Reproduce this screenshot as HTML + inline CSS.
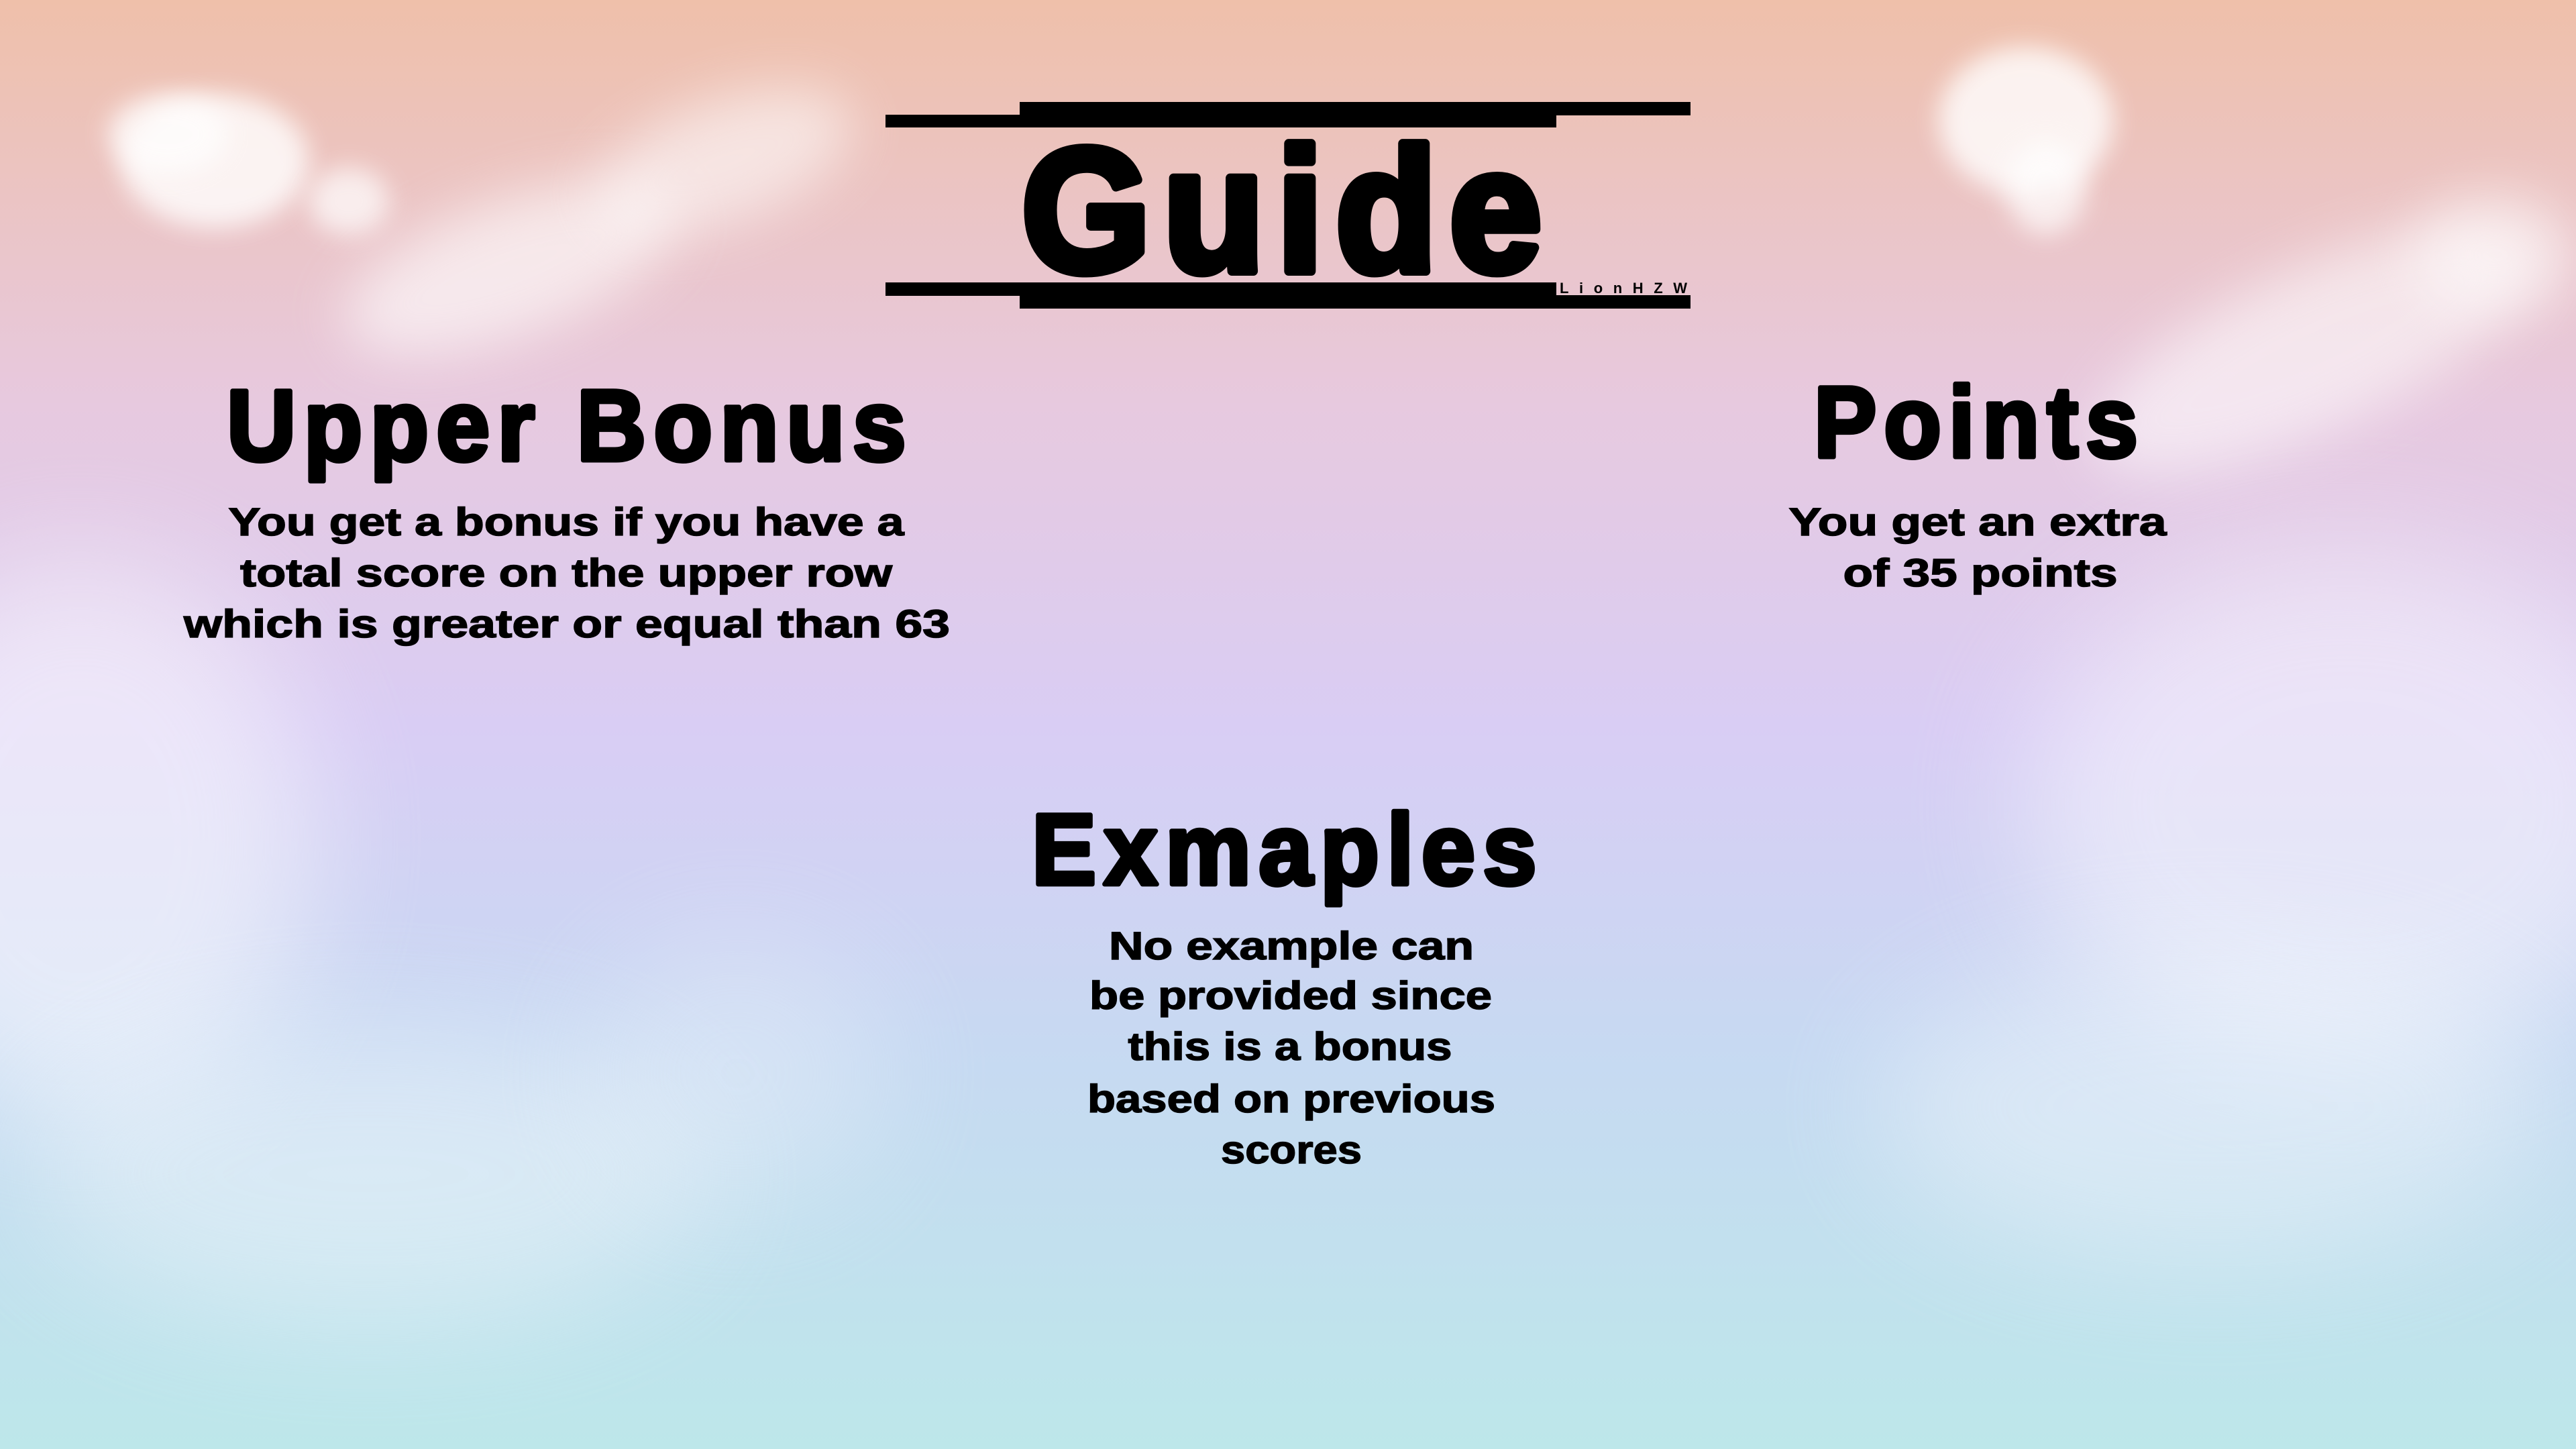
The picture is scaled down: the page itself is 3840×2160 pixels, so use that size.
<!DOCTYPE html>
<html><head><meta charset="utf-8"><style>
html,body{margin:0;padding:0;width:3840px;height:2160px;overflow:hidden}
svg{display:block}
text{font-family:"Liberation Sans",sans-serif;font-weight:bold;fill:#000}
</style></head><body>
<svg width="3840" height="2160" viewBox="0 0 3840 2160" xmlns="http://www.w3.org/2000/svg">
<defs>
<linearGradient id="bg" x1="0" y1="0" x2="0" y2="1">
<stop offset="0" stop-color="#efc0aa"/>
<stop offset="0.28" stop-color="#e7c9df"/>
<stop offset="0.5" stop-color="#d9cdf4"/>
<stop offset="0.72" stop-color="#c7d9f2"/>
<stop offset="1" stop-color="#bde7ea"/>
</linearGradient>
<filter id="b0" x="-50%" y="-50%" width="200%" height="200%"><feGaussianBlur stdDeviation="18"/></filter>
<filter id="b1" x="-50%" y="-50%" width="200%" height="200%"><feGaussianBlur stdDeviation="40"/></filter>
<filter id="b2" x="-50%" y="-50%" width="200%" height="200%"><feGaussianBlur stdDeviation="90"/></filter>
</defs>
<rect width="3840" height="2160" fill="url(#bg)"/>
<!-- clouds -->
<g fill="#fff">
<ellipse cx="320" cy="240" rx="140" ry="100" opacity="0.8" filter="url(#b0)"/>
<ellipse cx="250" cy="200" rx="90" ry="60" opacity="0.7" filter="url(#b0)"/>
<ellipse cx="520" cy="300" rx="60" ry="50" opacity="0.7" filter="url(#b0)"/>
<ellipse cx="760" cy="400" rx="260" ry="100" opacity="0.6" filter="url(#b1)" transform="rotate(-20 760 400)"/>
<ellipse cx="1080" cy="240" rx="200" ry="90" opacity="0.55" filter="url(#b1)" transform="rotate(-20 1080 240)"/>
<ellipse cx="3020" cy="180" rx="130" ry="110" opacity="0.8" filter="url(#b0)"/>
<ellipse cx="3050" cy="280" rx="60" ry="70" opacity="0.7" filter="url(#b0)"/>
<ellipse cx="3450" cy="520" rx="360" ry="120" opacity="0.55" filter="url(#b1)" transform="rotate(-25 3450 520)"/>
<ellipse cx="3720" cy="380" rx="120" ry="90" opacity="0.5" filter="url(#b1)"/>
<ellipse cx="120" cy="1250" rx="350" ry="420" opacity="0.5" filter="url(#b2)"/>
<ellipse cx="550" cy="1750" rx="500" ry="220" opacity="0.35" filter="url(#b2)"/>
<ellipse cx="3500" cy="1200" rx="480" ry="380" opacity="0.45" filter="url(#b2)"/>
<ellipse cx="3300" cy="1650" rx="500" ry="230" opacity="0.35" filter="url(#b2)"/>
<ellipse cx="1100" cy="1600" rx="220" ry="200" opacity="0.25" filter="url(#b2)"/>
</g>
<!-- title bars -->
<g fill="#000">
<rect x="1520" y="152" width="1000" height="20"/>
<rect x="1320" y="171" width="1000" height="19"/>
<rect x="1320" y="421" width="1000" height="20"/>
<rect x="1520" y="440" width="1000" height="20"/>
</g>
<text x="2420" y="437" font-size="22" text-anchor="middle" textLength="190" lengthAdjust="spacing">LionHZW</text>
<!-- Guide -->
<text x="1920" y="404" font-size="262" text-anchor="middle" textLength="794" lengthAdjust="spacingAndGlyphs" letter-spacing="20" stroke="#000" stroke-width="14" stroke-linejoin="round">Guide</text>
<g stroke="#000" stroke-width="7" stroke-linejoin="round">
<text x="850" y="686" font-size="150" text-anchor="middle" textLength="1024" lengthAdjust="spacingAndGlyphs" letter-spacing="12">Upper Bonus</text>
<text x="2951" y="681" font-size="150" text-anchor="middle" textLength="494" lengthAdjust="spacingAndGlyphs" letter-spacing="12">Points</text>
<text x="1920" y="1318" font-size="150" text-anchor="middle" textLength="764" lengthAdjust="spacingAndGlyphs" letter-spacing="12">Exmaples</text>
</g>
<g font-size="58" text-anchor="middle" stroke="#000" stroke-width="1.5">
<text x="844" y="798" textLength="1007" lengthAdjust="spacingAndGlyphs">You get a bonus if you have a</text>
<text x="844" y="874" textLength="972" lengthAdjust="spacingAndGlyphs">total score on the upper row</text>
<text x="845" y="950" textLength="1142" lengthAdjust="spacingAndGlyphs">which is greater or equal than 63</text>
<text x="2948" y="798" textLength="563" lengthAdjust="spacingAndGlyphs">You get an extra</text>
<text x="2952" y="874" textLength="409" lengthAdjust="spacingAndGlyphs">of 35 points</text>
<text x="1925" y="1430" textLength="544" lengthAdjust="spacingAndGlyphs">No example can</text>
<text x="1924" y="1504" textLength="600" lengthAdjust="spacingAndGlyphs">be provided since</text>
<text x="1923" y="1580" textLength="483" lengthAdjust="spacingAndGlyphs">this is a bonus</text>
<text x="1925" y="1658" textLength="608" lengthAdjust="spacingAndGlyphs">based on previous</text>
<text x="1925" y="1734" textLength="210" lengthAdjust="spacingAndGlyphs">scores</text>
</g>
</svg>
</body></html>
